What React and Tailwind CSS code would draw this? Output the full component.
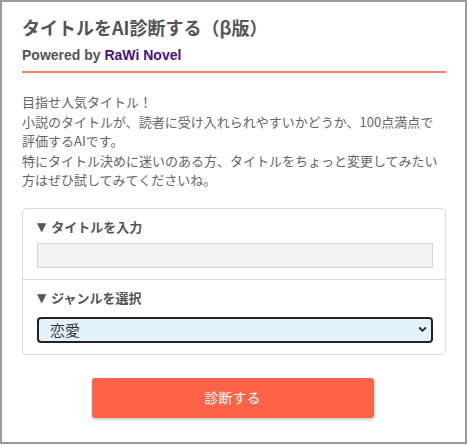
import React, { useState } from 'react';

const jp = { fontFamily: '"Noto Sans CJK JP", "Noto Sans", sans-serif' };

const Label = ({ children }) => (
  <label className="flex items-center text-[13px] leading-[18px] font-bold text-[#555]">
    <span className="text-[12px] mr-[5px]" style={{ fontFamily: '"DejaVu Sans", sans-serif' }}>▼</span>
    {children}
  </label>
);

const App = () => {
  const [title, setTitle] = useState('');
  const [genre, setGenre] = useState('恋愛');

  return (
    <div className="w-[468px] h-[445px] bg-white" style={jp}>
      <div className="w-[467px] h-[444px] border-2 border-[#9a9a9a] bg-white px-[20px] pt-[12px]">
        <h1 className="text-[18px] leading-[26px] font-bold text-[#555]">タイトルをAI診断する（β版）</h1>
        <p
          className="mt-[5px] text-[14px] leading-[20px] font-bold text-[#555]"
          style={{ fontFamily: '"Liberation Sans", Arial, sans-serif' }}
        >
          Powered by <span className="text-[#4b0f87]">RaWi Novel</span>
        </p>
        <div className="mt-[6px] h-[2px] w-[424px] bg-[#ff8066]" />

        <p className="mt-[19px] text-[13px] leading-[19.6px] text-[#666] whitespace-nowrap">
          目指せ人気タイトル！<br />
          小説のタイトルが、読者に受け入れられやすいかどうか、100点満点で<br />
          評価するAIです。<br />
          特にタイトル決めに迷いのある方、タイトルをちょっと変更してみたい<br />
          方はぜひ試してみてくださいね。
        </p>

        <div className="mt-[18px] w-[424px] rounded-[4px] border border-[#ddd]">
          <div className="px-[14px] pt-[9px] pb-[11px]">
            <Label>タイトルを入力</Label>
            <input
              value={title}
              onChange={(e) => setTitle(e.target.value)}
              className="mt-[7px] block w-[396px] h-[25px] border border-[#d6d6d6] bg-[#f2f2f2] outline-none"
            />
          </div>
          <div className="border-t border-[#ddd] px-[14px] pt-[9px] pb-[11px]">
            <Label>ジャンルを選択</Label>
            <div className="relative mt-[10px] w-[396px]">
              <select
                value={genre}
                onChange={(e) => setGenre(e.target.value)}
                className="block w-full h-[26px] appearance-none rounded-[4px] border-2 border-[#222] bg-[#e3f3fd] pl-[11px] text-[15px] text-[#333] outline-none"
              >
                <option>恋愛</option>
                <option>ファンタジー</option>
                <option>ミステリー</option>
                <option>SF</option>
              </select>
              <svg className="pointer-events-none absolute right-[6px] top-[9px]" width="9" height="7" viewBox="0 0 9 7">
                <path d="M1.2 1.5 L4.5 4.8 L7.8 1.5" fill="none" stroke="#222" strokeWidth="1.8" />
              </svg>
            </div>
          </div>
        </div>

        <div className="flex justify-center mt-[23px] pr-[2px]">
          <button className="w-[282px] h-[40px] rounded-[3px] bg-[#ff6347] text-white text-[14px] shadow-[0_2px_3px_rgba(0,0,0,0.2)]">
            診断する
          </button>
        </div>
      </div>
    </div>
  );
};

export default App;
